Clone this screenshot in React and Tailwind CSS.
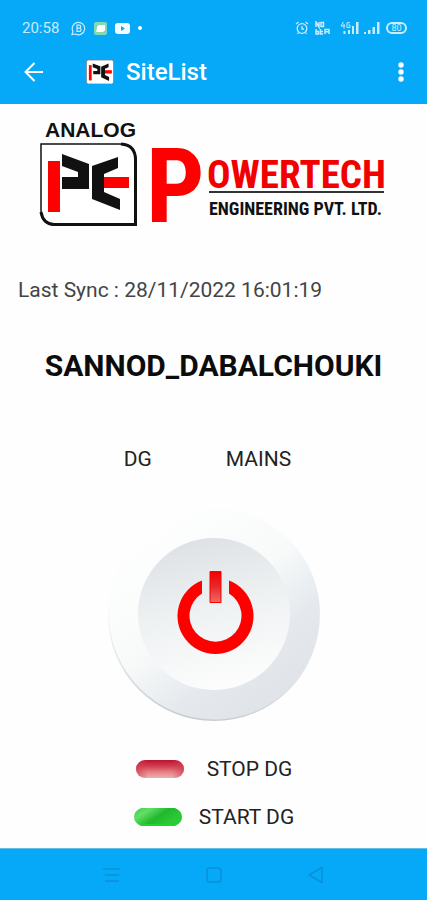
import React from "react";

function Emblem() {
  return (
    <g>
      <path d="M1 1H79Q96 1 96 18V82H16Q1 82 1 67Z" fill="#fff" stroke="#111" strokeWidth="1.5" />
      <path d="M81 1Q96 2 95.500 18V81.500H14Q3 81 1 69" fill="none" stroke="#111" strokeWidth="3" />
      <path d="M8 18H20V69H8Z" fill="#fe0000" />
      <path d="M22 11L49 21V46H22V34H38V29L22 23Z" fill="#111" />
      <path d="M78 14V25L64 31V49L80 56V67L52 56V23Z" fill="#111" />
      <path d="M64 34H89V45H64Z" fill="#fe0000" />
    </g>
  );
}

function StatusBar() {
  return (
    <div className="flex h-8 items-center justify-between pt-6 pl-[22px] pr-5 text-[#c9ecfd]">
      <div className="flex items-center gap-2">
        <span className="mr-1 text-[15px] leading-5">20:58</span>
        <svg width="15" height="15" viewBox="0 0 15 15" fill="none" stroke="currentColor" aria-hidden="true">
          <path d="M1 13.5L2 10.5A6.2 6.2 0 1 1 4.5 13Z" strokeWidth="1.2" />
          <path d="M6 4.2H8.2Q9.8 4.2 9.8 5.6T8.2 7.2H6.2H8.4Q10 7.2 10 8.8T8.4 10.4H6Z" strokeWidth="1.2" />
        </svg>
        <svg width="13" height="13" viewBox="0 0 13 13" aria-hidden="true">
          <rect width="13" height="13" rx="2" fill="#83d9b4" />
          <path d="M3 6Q3 3 6 3H11V7Q11 10 8 10H2Z" fill="#fff" />
        </svg>
        <svg width="15" height="11" viewBox="0 0 15 11" aria-hidden="true">
          <rect width="15" height="11" rx="3" fill="#f4fcff" />
          <path d="M6 3L10 5.500L6 8Z" fill="#05a9f8" />
        </svg>
        <span className="size-1 rounded-full bg-white" />
      </div>
      <div className="flex items-center">
        <svg width="14" height="14" viewBox="0 0 14 14" fill="none" stroke="currentColor" strokeWidth="1.3" aria-hidden="true">
          <circle cx="7" cy="7.500" r="4.800" />
          <path d="M7 5V8H9M1 3L3.500 1M13 3L10.500 1M3.500 11.500L2.500 13M10.500 11.500L11.500 13" />
        </svg>
        <svg className="ml-1.5" width="15" height="14" viewBox="0 0 15 14" fill="none" stroke="currentColor" strokeWidth="1.500" aria-hidden="true">
          <path d="M1 6V1L4 6V1M6 1.500H8.500V5.500H6ZM1 8V13H3.500V10.500H1M5.500 8V13H8M5.500 10.500H8M10 13V8.500H14V13M10 10.800H14" />
        </svg>
        <svg className="ml-2.5" width="19" height="14" viewBox="0 0 19 14" fill="currentColor" aria-hidden="true">
          <path d="M3.500 10H5.500V13H3.500ZM8 9H10V13H8ZM12 5H14V13H12ZM16 1H18.500V13H16Z" />
          <path d="M3.500 1L1 5H5M4 3V7.500M10 1.700H7V6.500H10V4H8.500" fill="none" stroke="currentColor" />
        </svg>
        <svg className="ml-1" width="17" height="14" viewBox="0 0 17 14" fill="currentColor" aria-hidden="true">
          <path d="M1 11H3V13H1ZM5 9H7.500V13H5ZM9.500 6H12V13H9.500ZM14 1H16.500V13H14Z" />
        </svg>
        <span className="ml-1.5 flex h-3 w-[21px] items-center justify-center rounded-full border-2 border-current text-[9px] leading-none">80</span>
      </div>
    </div>
  );
}

function Header() {
  return (
    <header className="h-[104px] bg-[#05a9f8]">
      <StatusBar />
      <div className="flex items-center pt-5 pl-6 pr-[14px] text-white">
        <button type="button" aria-label="Back" className="flex h-10 w-[22px] items-center">
          <svg width="20" height="20" viewBox="0 0 20 20" fill="none" stroke="currentColor" strokeWidth="2">
            <path d="M19 10H2M10.500 1L1.500 10L10.500 19" />
          </svg>
        </button>
        <svg className="ml-10" width="28" height="24" viewBox="-5 -6 107 94" aria-hidden="true">
          <rect x="-5" y="-6" width="107" height="94" rx="8" fill="#fff" stroke="#777" strokeWidth="3" />
          <path d="M5 14H16V74H5Z" fill="#fe0000" />
          <path d="M20 8L50 18V50H22V37H38V29L20 22Z" fill="#111" />
          <path d="M82 8V22L68 28V53L84 61V76L53 62V20Z" fill="#111" />
          <path d="M68 34H95V47H68Z" fill="#fe0000" />
        </svg>
        <h1 className="ml-3 flex-1 text-2xl font-medium leading-10">SiteList</h1>
        <button type="button" aria-label="More options" className="flex h-10 w-6 items-center justify-center">
          <svg width="6" height="20" viewBox="0 0 6 20" fill="currentColor">
            <circle cx="3" cy="3" r="2.700" />
            <circle cx="3" cy="10" r="2.700" />
            <circle cx="3" cy="17" r="2.700" />
          </svg>
        </button>
      </div>
    </header>
  );
}

function CompanyLogo() {
  return (
    <svg
      className="mx-auto block w-[350px] font-['Roboto_Condensed','Liberation_Sans_Narrow',sans-serif] font-bold"
      viewBox="0 0 350 140"
      role="img"
      aria-label="Analog Powertech Engineering Pvt. Ltd."
    >
      <text x="6" y="25" fontSize="21" fill="#111" className="font-['Liberation_Sans',sans-serif]">ANALOG</text>
      <g transform="translate(1 31)">
        <Emblem />
      </g>
      <text x="107" y="110" fontSize="103" fill="#fe0000">P</text>
      <text x="168" y="76" fontSize="39" fill="#f20000">OWERTECH</text>
      <path d="M170 80H345" stroke="#333" strokeWidth="2" />
      <text x="170" y="103" fontSize="18" fill="#111">ENGINEERING PVT. LTD.</text>
    </svg>
  );
}

function PowerButton() {
  return (
    <button type="button" aria-label="Power" className="mx-auto mt-8 block rounded-full">
      <svg width="220" height="220" viewBox="0 0 220 220">
        <defs>
          <linearGradient id="rim" x1="0.200" y1="0.100" x2="0.800" y2="0.900">
            <stop offset="0" stopColor="#fefefe" />
            <stop offset="0.450" stopColor="#f8fafa" />
            <stop offset="0.750" stopColor="#e5e9ed" />
            <stop offset="1" stopColor="#e0e4e8" />
          </linearGradient>
          <linearGradient id="edge" x1="0.500" y1="0" x2="0.400" y2="1">
            <stop offset="0.500" stopColor="#fafbfb" />
            <stop offset="1" stopColor="#c9cccf" />
          </linearGradient>
          <linearGradient id="face" x1="0.350" y1="0" x2="0.600" y2="1">
            <stop offset="0" stopColor="#dde1e5" />
            <stop offset="0.450" stopColor="#eef1f2" />
            <stop offset="1" stopColor="#fdfdfd" />
          </linearGradient>
          <linearGradient id="bar" x1="0" y1="0" x2="0" y2="1">
            <stop offset="0" stopColor="#f00000" />
            <stop offset="0.500" stopColor="#e82a2c" />
            <stop offset="1" stopColor="#f06a68" />
          </linearGradient>
        </defs>
        <circle cx="110" cy="110" r="106" fill="url(#edge)" />
        <circle cx="110.500" cy="109" r="105.500" fill="url(#rim)" />
        <circle cx="110" cy="109" r="76" fill="url(#face)" />
        <path d="M98 75.500A38 38 0 1 0 125 75.500V88.500A26 26 0 1 1 98 88.500Z" fill="#fe0000" />
        <path d="M106 66.500H117V97.500H106Z" fill="url(#bar)" stroke="#f00" />
      </svg>
    </button>
  );
}

function StopPill() {
  return (
    <svg width="50" height="20" viewBox="0 0 50 20" aria-hidden="true">
      <defs>
        <linearGradient id="stop-fill" x1="0" y1="0" x2="0" y2="1">
          <stop offset="0" stopColor="#b91331" />
          <stop offset="0.350" stopColor="#d33e50" />
          <stop offset="0.700" stopColor="#e78689" />
          <stop offset="1" stopColor="#efb0a9" />
        </linearGradient>
        <linearGradient id="stop-side" x1="0" y1="0" x2="1" y2="0">
          <stop offset="0" stopColor="#cf3f52" />
          <stop offset="0.250" stopColor="#cf3f52" stopOpacity="0" />
          <stop offset="0.750" stopColor="#cf3f52" stopOpacity="0" />
          <stop offset="1" stopColor="#cf3f52" />
        </linearGradient>
      </defs>
      <rect x="1" y="1" width="48" height="18" rx="9" fill="url(#stop-fill)" />
      <rect x="1" y="1" width="48" height="18" rx="9" fill="url(#stop-side)" opacity="0.700" />
    </svg>
  );
}

function StartPill() {
  return (
    <svg width="50" height="20" viewBox="0 0 50 20" aria-hidden="true">
      <defs>
        <linearGradient id="start-fill" x1="0" y1="0" x2="0.900" y2="0.500">
          <stop offset="0" stopColor="#3fcb46" />
          <stop offset="0.300" stopColor="#62df68" />
          <stop offset="0.650" stopColor="#21b82d" />
          <stop offset="1" stopColor="#2bc937" />
        </linearGradient>
      </defs>
      <path d="M8 1H42Q49 4 49 10T42 19H8Q1 16 1 10T8 1Z" fill="url(#start-fill)" />
      <path d="M8 18H42" fill="none" stroke="#23d32c" strokeWidth="2" />
    </svg>
  );
}

function NavBar() {
  return (
    <nav className="mt-auto flex h-[52px] items-center justify-center gap-[78px] border-t border-[#65bfe8] bg-[#05a9f8] text-[#0990d6]">
      <button type="button" aria-label="Recent apps">
        <svg width="24" height="20" viewBox="0 0 24 20" fill="none" stroke="currentColor" strokeWidth="1.500">
          <path d="M3 4H20M5 10H19M5 16H19" />
        </svg>
      </button>
      <button type="button" aria-label="Home">
        <svg width="24" height="20" viewBox="0 0 24 20" fill="none" stroke="currentColor" strokeWidth="1.500">
          <rect x="5" y="3" width="14" height="14" rx="3" />
        </svg>
      </button>
      <button type="button" aria-label="Back to previous screen">
        <svg width="24" height="20" viewBox="0 0 24 20" fill="none" stroke="currentColor" strokeWidth="1.500" strokeLinejoin="round">
          <path d="M18 2.500V17.500L5 10Z" />
        </svg>
      </button>
    </nav>
  );
}

export default function App() {
  return (
    <div className="flex min-h-screen flex-col bg-[#fefefe] font-['Roboto',sans-serif] text-[#222]">
      <Header />
      <main className="flex flex-col pt-2">
        <CompanyLogo />
        <p className="mt-6 pl-[18px] text-[21px] leading-7 text-[#444]">Last Sync : 28/11/2022 16:01:19</p>
        <h2 className="mt-11 text-center text-[30px] font-bold leading-9 text-[#0c0c0c]">SANNOD_DABALCHOUKI</h2>
        <div className="mt-[61px] flex justify-center gap-[74px] pr-3 text-[21px] leading-7">
          <span>DG</span>
          <span>MAINS</span>
        </div>
        <PowerButton />
        <div className="mt-[30px] flex flex-col items-center gap-5 text-[21px] leading-7">
          <button type="button" className="flex items-center gap-[22px]">
            <StopPill />
            STOP DG
          </button>
          <button type="button" className="flex items-center gap-4">
            <StartPill />
            START DG
          </button>
        </div>
      </main>
      <NavBar />
    </div>
  );
}
